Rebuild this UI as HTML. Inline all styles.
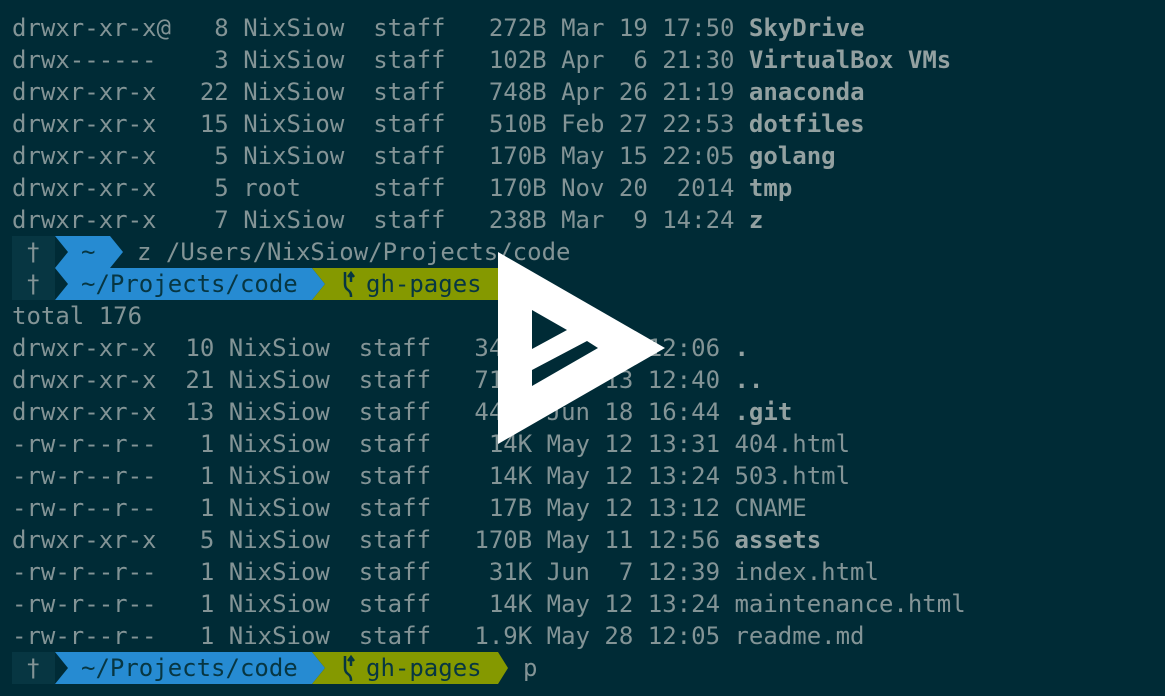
<!DOCTYPE html>
<html><head><meta charset="utf-8"><style>
html,body{margin:0;padding:0;background:#002b36;width:1165px;height:696px;overflow:hidden}
pre{position:absolute;left:12px;top:12px;margin:0;font-family:"DejaVu Sans Mono","Liberation Mono",monospace;font-size:24px;line-height:32px;color:#839496;white-space:pre}
b{color:#93a1a1;font-weight:bold}
.t{position:absolute;font-family:"DejaVu Sans Mono","Liberation Mono",monospace;font-size:24px;line-height:32px;white-space:pre}
svg{position:absolute;left:0;top:0}
</style></head><body>
<svg width="1165" height="696">
<!-- row 7 y=236 -->
<rect x="12" y="236" width="43" height="32" fill="#073642"/>
<polygon points="55,236 110,236 123,252 110,268 55,268 68,252" fill="#268bd2"/>
<!-- row 8 y=268 -->
<rect x="12" y="268" width="43" height="32" fill="#073642"/>
<polygon points="55,268 312,268 325,284 312,300 55,300 68,284" fill="#268bd2"/>
<polygon points="312,268 498,268 508,284 498,300 312,300 325,284" fill="#859900"/>
<!-- row 20 y=652 -->
<rect x="12" y="652" width="43" height="32" fill="#073642"/>
<polygon points="55,652 312,652 325,668 312,684 55,684 68,668" fill="#268bd2"/>
<polygon points="312,652 498,652 508,668 498,684 312,684 325,668" fill="#859900"/>
<g stroke="#073642" stroke-width="2.5" fill="none">
<path d="M345,272 V284 Q345,288 348,290 Q351,292 351,296 V297"/>
<path d="M351,282 V274 M348,277 L351,273 L354,277"/>
<path d="M345,656 V668 Q345,672 348,674 Q351,676 351,680 V681"/>
<path d="M351,666 V658 M348,661 L351,657 L354,661"/>
</g>
</svg>
<pre>drwxr-xr-x@   8 NixSiow  staff   272B Mar 19 17:50 <b>SkyDrive</b>
drwx------    3 NixSiow  staff   102B Apr  6 21:30 <b>VirtualBox VMs</b>
drwxr-xr-x   22 NixSiow  staff   748B Apr 26 21:19 <b>anaconda</b>
drwxr-xr-x   15 NixSiow  staff   510B Feb 27 22:53 <b>dotfiles</b>
drwxr-xr-x    5 NixSiow  staff   170B May 15 22:05 <b>golang</b>
drwxr-xr-x    5 root     staff   170B Nov 20  2014 <b>tmp</b>
drwxr-xr-x    7 NixSiow  staff   238B Mar  9 14:24 <b>z</b>


total 176
drwxr-xr-x  10 NixSiow  staff   340B May 13 12:06 <b>.</b>
drwxr-xr-x  21 NixSiow  staff   714B Jun 13 12:40 <b>..</b>
drwxr-xr-x  13 NixSiow  staff   442B Jun 18 16:44 <b>.git</b>
-rw-r--r--   1 NixSiow  staff    14K May 12 13:31 404.html
-rw-r--r--   1 NixSiow  staff    14K May 12 13:24 503.html
-rw-r--r--   1 NixSiow  staff    17B May 12 13:12 CNAME
drwxr-xr-x   5 NixSiow  staff   170B May 11 12:56 <b>assets</b>
-rw-r--r--   1 NixSiow  staff    31K Jun  7 12:39 index.html
-rw-r--r--   1 NixSiow  staff    14K May 12 13:24 maintenance.html
-rw-r--r--   1 NixSiow  staff   1.9K May 28 12:05 readme.md
</pre>
<div class="t" style="left:26px;top:236px;color:#839496">†</div>
<div class="t" style="left:81px;top:236px;color:#073642">~</div>
<div class="t" style="left:137px;top:236px;color:#839496">z /Users/NixSiow/Projects/code</div>
<div class="t" style="left:26px;top:268px;color:#839496">†</div>
<div class="t" style="left:81px;top:268px;color:#073642">~/Projects/code</div>
<div class="t" style="left:366px;top:268px;color:#073642">gh-pages</div>
<div class="t" style="left:26px;top:652px;color:#839496">†</div>
<div class="t" style="left:81px;top:652px;color:#073642">~/Projects/code</div>
<div class="t" style="left:366px;top:652px;color:#073642">gh-pages</div>
<div class="t" style="left:523px;top:652px;color:#839496">p</div>
<svg width="1165" height="696">
<polygon points="498,252 665,348 498,444" fill="#fff"/>
<polygon points="532,310 567,330 532,349" fill="#002b36"/>
<polygon points="532,370 587,341 598,348 532,386" fill="#002b36"/>
</svg>
</body></html>
